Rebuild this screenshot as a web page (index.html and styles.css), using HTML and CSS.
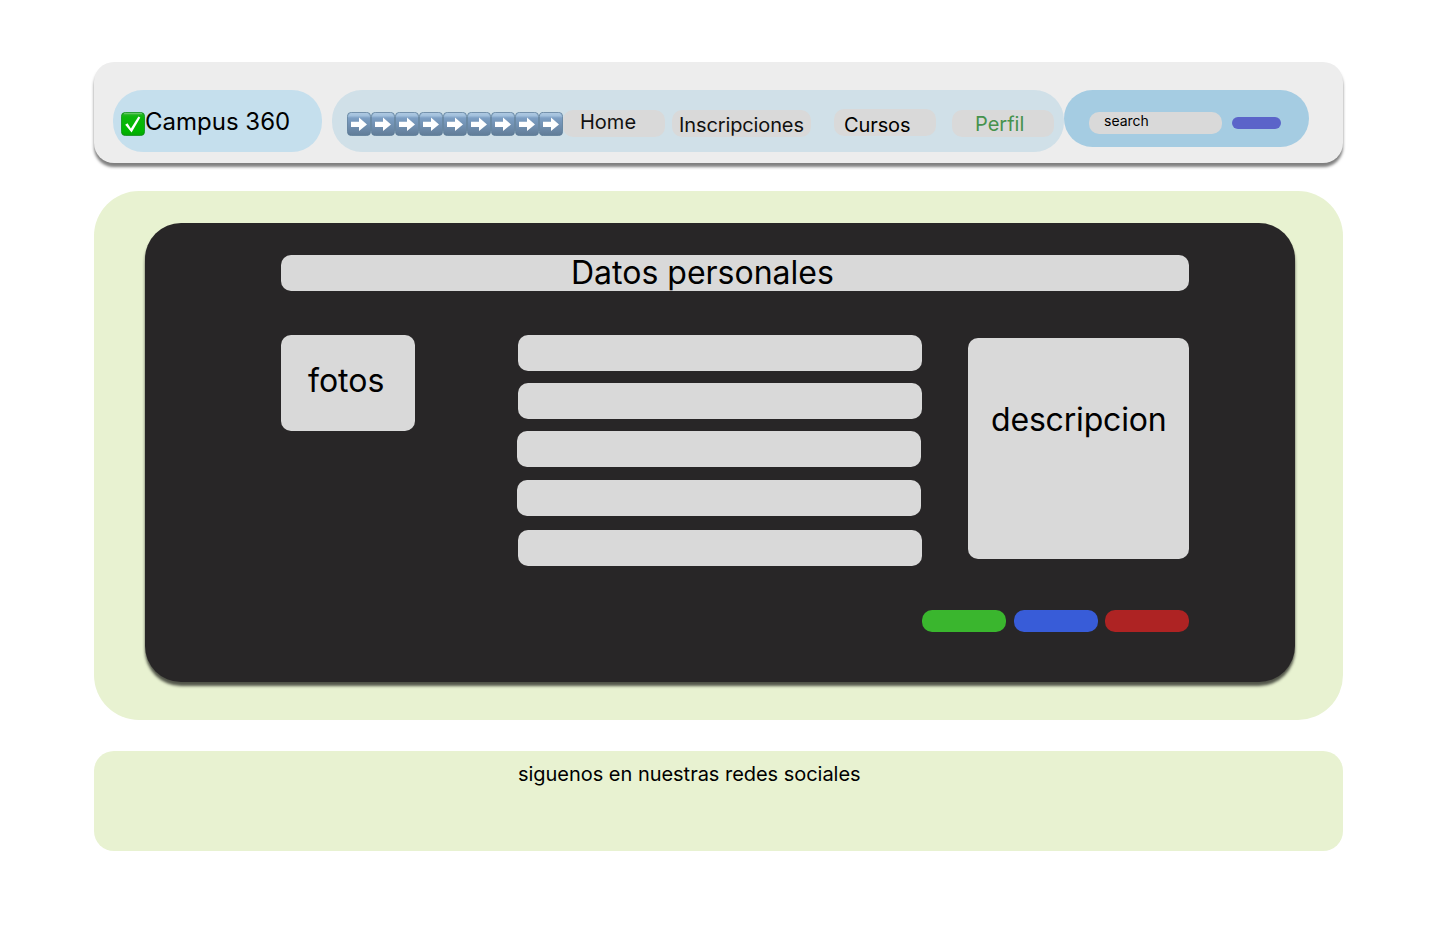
FILE: index.html
```html
<!DOCTYPE html>
<html lang="es">
<head>
<meta charset="utf-8">
<title>Campus 360</title>
<link rel="stylesheet" href="styles.css">
</head>
<body>
<svg class="defs" aria-hidden="true">
  <defs>
    <linearGradient id="blue" x1="0" y1="0" x2="0" y2="1"><stop offset="0" stop-color="#a3c1dd"/><stop offset=".14" stop-color="#a3c1dd"/><stop offset=".24" stop-color="#7d9fc4"/><stop offset="1" stop-color="#617c97"/></linearGradient>
    <linearGradient id="green" x1="0" y1="0" x2="0" y2="1"><stop offset="0" stop-color="#35b535"/><stop offset=".2" stop-color="#0cb60c"/><stop offset=".8" stop-color="#00b700"/><stop offset="1" stop-color="#05a405"/></linearGradient>
    <symbol id="arrow" viewBox="0 0 24 24">
      <rect x=".4" y=".4" width="23.200" height="23.2" rx="4" fill="url(#blue)" stroke="#587896" stroke-width=".8"/>
      <path d="M2.800 1.800h18.400" stroke="#b4cde3" stroke-width=".8"/>
      <path d="M4 9.800h8V5.600L20 12.400 12 19v-4H4z" fill="#fff"/>
    </symbol>
  </defs>
</svg>
<header class="header">
  <div class="brand">
    <svg class="brand-icon" viewBox="0 0 24 24"><rect x=".4" y=".4" width="23.2" height="23.2" rx="4" fill="url(#green)" stroke="#078c12" stroke-width=".8"/><path d="M3 1.700h18" stroke="#7ed27e" stroke-width=".8"/><path d="M4.200 12.700l2.300-1.400 3.400 5.100L17.400 4.600l1.900 1L10.600 20.600z" fill="#fff"/></svg>
    <span class="brand-name">Campus 360</span>
  </div>
  <nav class="nav">
    <div class="arrows">
      <svg class="arrow"><use href="#arrow"/></svg><svg class="arrow"><use href="#arrow"/></svg><svg class="arrow"><use href="#arrow"/></svg><svg class="arrow"><use href="#arrow"/></svg><svg class="arrow"><use href="#arrow"/></svg><svg class="arrow"><use href="#arrow"/></svg><svg class="arrow"><use href="#arrow"/></svg><svg class="arrow"><use href="#arrow"/></svg><svg class="arrow"><use href="#arrow"/></svg>
    </div>
    <a class="chip home">Home</a>
    <a class="chip enroll">Inscripciones</a>
    <a class="chip courses">Cursos</a>
    <a class="chip profile">Perfil</a>
  </nav>
  <div class="search">
    <div class="search-field">search</div>
    <div class="search-button"></div>
  </div>
</header>
<main class="main">
  <section class="panel">
    <h1 class="title">Datos personales</h1>
    <div class="columns">
      <div class="photo">fotos</div>
      <div class="fields">
        <div class="field"></div>
        <div class="field"></div>
        <div class="field shifted"></div>
        <div class="field shifted fourth"></div>
        <div class="field fifth"></div>
      </div>
      <div class="description">descripcion</div>
    </div>
    <div class="actions">
      <div class="action save"></div>
      <div class="action edit"></div>
      <div class="action delete"></div>
    </div>
  </section>
</main>
<footer class="footer">siguenos en nuestras redes sociales</footer>
</body>
</html>
```

FILE: styles.css
```css
* { box-sizing: border-box; }
body {
  margin: 0;
  padding: 62px 97px 0 94px;
  height: 941px;
  background: #fff;
  color: #000;
  font-family: Inter, "Liberation Sans", sans-serif;
}
.defs { display: block; width: 0; height: 0; }
.header {
  display: flex;
  align-items: flex-start;
  height: 101px;
  padding: 28px 0 0 19px;
  border-radius: 20px;
  background: #ededed;
  box-shadow: 0 4px 3px rgba(0, 0, 0, .5);
}
.brand {
  display: flex;
  width: 209px;
  height: 62px;
  padding: 17px 0 0 8px;
  border-radius: 30px;
  background: #c5dfed;
}
.brand-icon { width: 24px; height: 24px; margin-top: 4.5px; }
.brand-name { font-size: 24px; line-height: 29px; white-space: nowrap; }
.nav {
  display: flex;
  align-items: flex-start;
  width: 732px;
  height: 62px;
  margin-left: 10px;
  padding: 20px 0 0 15px;
  border-radius: 30px;
  background: #d0e0e8;
}
.arrows { display: flex; margin-top: 1.5px; }
.arrow { width: 24px; height: 24px; }
.chip {
  height: 27px;
  border-radius: 10px;
  background: #d9d9d9;
  font-size: 20px;
  line-height: 24px;
  color: #111;
}
.home { width: 102px; padding-left: 17px; }
.enroll { width: 139px; margin-left: 7px; padding: 3px 0 0 7px; letter-spacing: -.12px; }
.courses { width: 102px; margin: -1px 0 0 23px; padding: 4px 0 0 10px; color: #000; letter-spacing: -.1px; }
.profile { width: 102px; margin-left: 16px; padding: 2px 0 0 23px; color: #46924d; }
.search {
  display: flex;
  align-items: flex-start;
  width: 245px;
  height: 57px;
  padding: 22px 0 0 25px;
  border-radius: 28.5px;
  background: #a5cce2;
}
.search-field {
  width: 133px;
  height: 22px;
  padding: 0 0 0 15px;
  border-radius: 10px;
  background: #d9d9d9;
  font-size: 14px;
  line-height: 17px;
}
.search-button {
  width: 49px;
  height: 12px;
  margin: 5px 0 0 10px;
  border-radius: 6px;
  background: #5b64c9;
}
.main {
  height: 529px;
  margin-top: 28px;
  padding: 32px 48px 0 51px;
  border-radius: 45px;
  background: #e8f2d1;
}
.panel {
  height: 459px;
  padding: 32px 106px 0 136px;
  border-radius: 36px;
  background: #282627;
  box-shadow: 0 4px 3px rgba(0, 0, 0, .65);
}
.title {
  height: 36px;
  margin: 0;
  padding-left: 290px;
  border-radius: 10px;
  background: #d9d9d9;
  font-size: 32px;
  font-weight: 400;
  line-height: 36px;
}
.columns { display: flex; align-items: flex-start; margin-top: 44px; }
.photo, .description {
  border-radius: 10px;
  background: #d9d9d9;
  font-size: 32px;
  line-height: 39px;
}
.photo { width: 134px; height: 96px; padding: 26px 0 0 27px; }
.fields { width: 404px; height: 231px; margin-left: 103px; }
.field {
  height: 36px;
  margin-bottom: 12px;
  border-radius: 10px;
  background: #d9d9d9;
}
.shifted { margin-left: -1px; margin-right: 1px; }
.fourth { margin-top: 13px; }
.fifth { margin-top: 14px; margin-bottom: 0; }
.description { width: 221px; height: 221px; margin: 3px 0 0 46px; padding: 62px 0 0 23px; letter-spacing: -.18px; }
.actions { display: flex; justify-content: flex-end; margin-top: 44px; }
.action { width: 84px; height: 22px; border-radius: 10px; }
.save { background: #3ab62e; }
.edit { margin-left: 8px; background: #385cd8; }
.delete { margin-left: 7px; background: #ae2323; }
.footer {
  height: 100px;
  margin-top: 31px;
  padding: 11px 0 0 424px;
  border-radius: 20px;
  background: #e8f2d1;
  font-size: 20px;
  line-height: 24px;
  letter-spacing: -.03px;
}
```
